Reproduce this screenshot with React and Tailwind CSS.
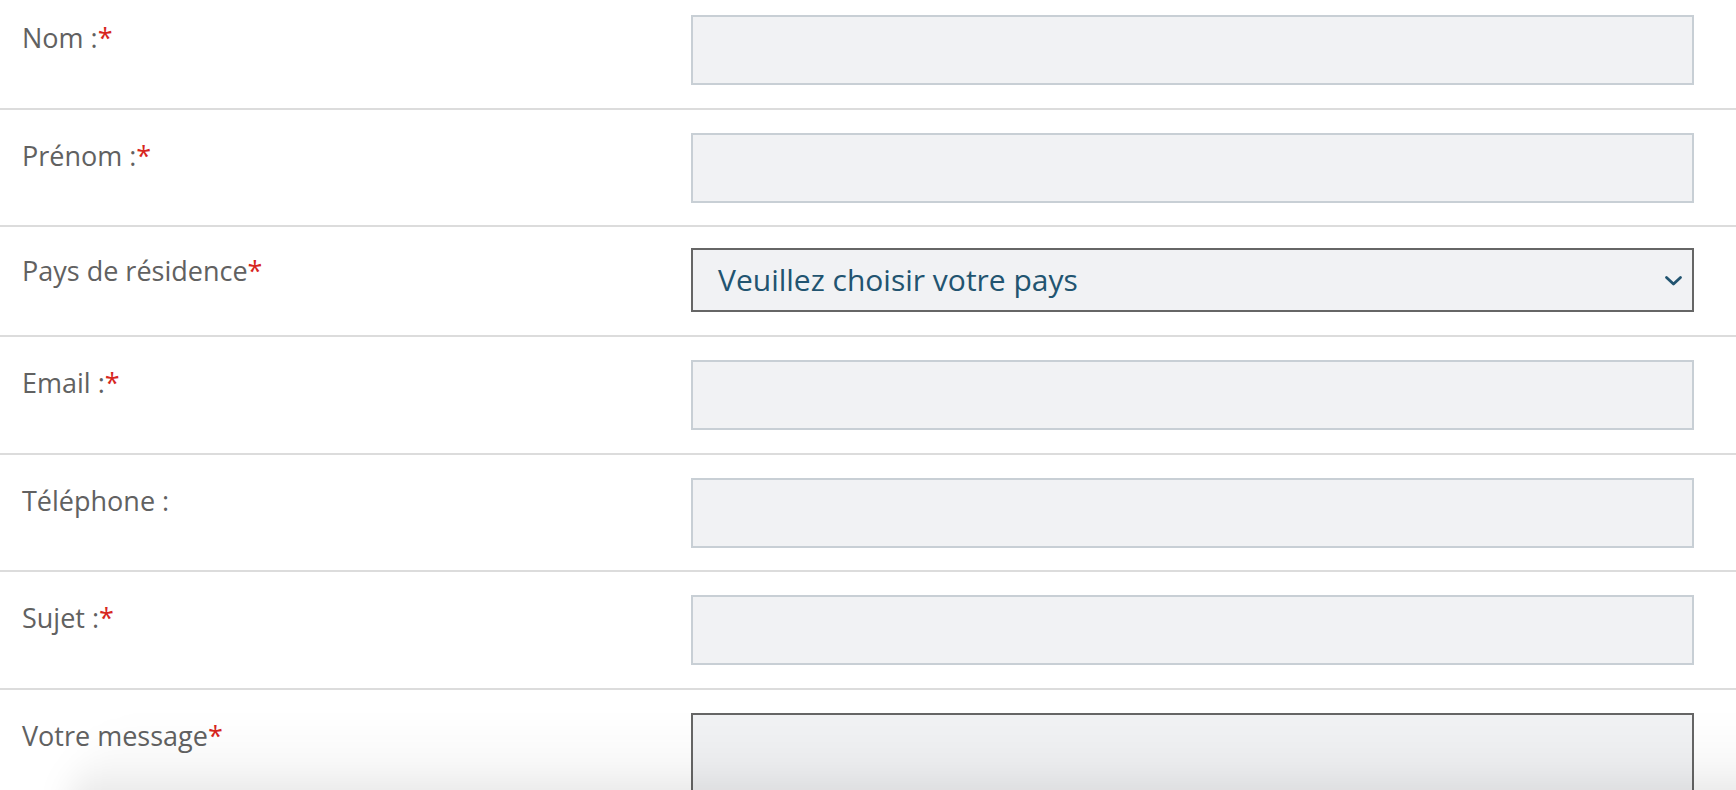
import React from "react";

const font = { fontFamily: '"Open Sans", "Noto Sans", sans-serif' };

function Label({ text, req }) {
  return (
    <div className="w-[669px] shrink-0 pt-[5px] text-[27px] leading-[36px] text-[#616161]">
      {text}
      {req && <span className="text-[#d7261e]">*</span>}
    </div>
  );
}

function Row({ children, first }) {
  return (
    <div
      className={`flex border-b-2 border-[#dcdcdc] pl-[22px] pr-[42px] ${first ? "pt-[15px]" : "pt-[23px]"} pb-[22.5px]`}
    >
      {children}
    </div>
  );
}

function Input() {
  return <div className="h-[70px] flex-1 border-2 border-[#c8cfd5] bg-[#f1f2f4]" />;
}

export default function App() {
  return (
    <div className="relative h-[790px] w-[1736px] overflow-hidden bg-white" style={font}>
      <Row first>
        <Label text="Nom :" req />
        <Input />
      </Row>
      <Row>
        <Label text="Prénom :" req />
        <Input />
      </Row>
      <div className="flex border-b-2 border-[#dcdcdc] pl-[22px] pr-[42px] pt-[21px] pb-[23px]">
        <Label text="Pays de résidence" req />
        <div className="flex h-[64px] flex-1 items-center justify-between border-2 border-[#666666] bg-[#f1f2f4] pl-[25px] pr-[9px]">
          <span className="text-[30px] leading-[40px] text-[#225470]">Veuillez choisir votre pays</span>
          <svg width="19" height="12" viewBox="0 0 19 12" className="mt-[2px]">
            <path d="M2.5 2.5 L9.5 9 L16.5 2.5" fill="none" stroke="#225470" strokeWidth="2.8" strokeLinecap="round" strokeLinejoin="round" />
          </svg>
        </div>
      </div>
      <Row>
        <Label text="Email :" req />
        <Input />
      </Row>
      <Row>
        <Label text="Téléphone :" />
        <Input />
      </Row>
      <Row>
        <Label text="Sujet :" req />
        <Input />
      </Row>
      <div className="flex pl-[22px] pr-[42px] pt-[23px]">
        <Label text="Votre message" req />
        <div className="h-[200px] flex-1 border-2 border-[#666666] bg-[#f1f2f4]" />
      </div>
      <div className="pointer-events-none absolute -bottom-[30px] left-[70px] -right-[60px] h-[100px] rounded-tl-[90px] bg-gradient-to-b from-transparent via-black/[0.03] to-black/[0.14] blur-lg" />
    </div>
  );
}
